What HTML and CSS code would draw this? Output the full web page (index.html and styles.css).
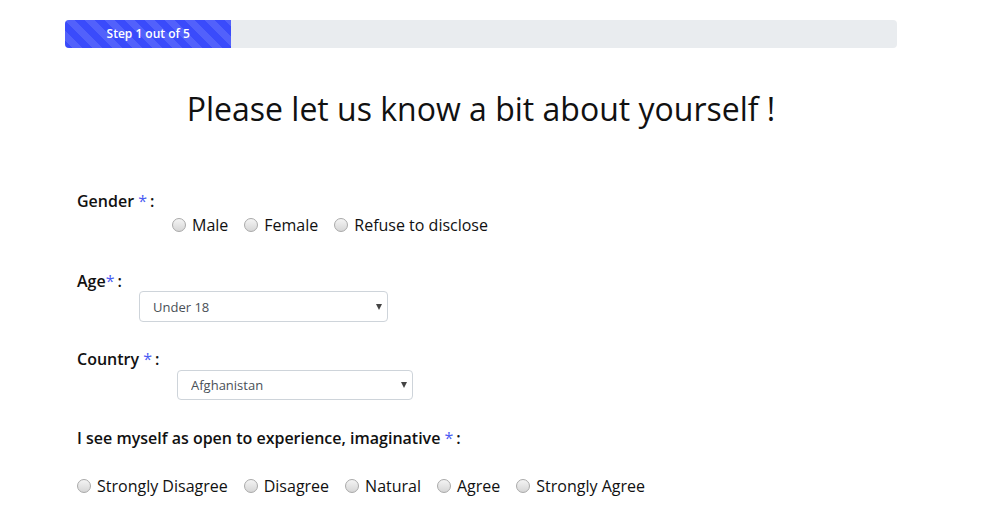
FILE: index.html
```html
<!DOCTYPE html>
<html lang="en">
<head>
<meta charset="utf-8">
<title>Survey - Step 1</title>
<link rel="stylesheet" href="styles.css">
</head>
<body>
<div class="page">
  <div class="progress">
    <div class="progress-bar" style="width: 20%">Step 1 out of 5</div>
  </div>

  <h2 class="title">Please let us know a bit about yourself !</h2>

  <form class="form">
    <div class="field field-gender">
      <div class="label">Gender <span class="req">*</span>:</div>
      <div class="radios radios-gender">
        <label class="opt"><input type="radio" name="gender"><span>Male</span></label>
        <label class="opt"><input type="radio" name="gender"><span>Female</span></label>
        <label class="opt"><input type="radio" name="gender"><span>Refuse to disclose</span></label>
      </div>
    </div>

    <div class="field field-age">
      <div class="label">Age<span class="req">*</span>:</div>
      <div class="select-wrap select-age">
        <select class="select">
          <option>Under 18</option>
          <option>18 - 24</option>
          <option>25 - 34</option>
        </select>
      </div>
    </div>

    <div class="field field-country">
      <div class="label">Country <span class="req">*</span>:</div>
      <div class="select-wrap select-country">
        <select class="select">
          <option>Afghanistan</option>
          <option>Albania</option>
        </select>
      </div>
    </div>

    <div class="field field-open">
      <div class="label">I see myself as open to experience, imaginative <span class="req">*</span>:</div>
      <div class="radios radios-open">
        <label class="opt"><input type="radio" name="open"><span>Strongly Disagree</span></label>
        <label class="opt"><input type="radio" name="open"><span>Disagree</span></label>
        <label class="opt"><input type="radio" name="open"><span>Natural</span></label>
        <label class="opt"><input type="radio" name="open"><span>Agree</span></label>
        <label class="opt"><input type="radio" name="open"><span>Strongly Agree</span></label>
      </div>
    </div>
  </form>
</div>
</body>
</html>
```

FILE: styles.css
```css
* { box-sizing: border-box; }

html, body {
  margin: 0;
  padding: 0;
  background: #ffffff;
}

body {
  font-family: "Open Sans", "Noto Sans", sans-serif;
  font-size: 16px;
  line-height: 24px;
  color: #212529;
}

.page {
  width: 832px;
  margin-left: 65px;
  padding-top: 20px;
}

.progress {
  display: flex;
  height: 28px;
  background: #e9ecef;
  border-radius: 4px;
  overflow: hidden;
}

.progress-bar {
  display: flex;
  align-items: center;
  justify-content: center;
  color: #ffffff;
  font-size: 12px;
  font-weight: 600;
  background-color: #3a4bfb;
  background-image: linear-gradient(45deg,
    rgba(255,255,255,.12) 25%, transparent 25%,
    transparent 50%, rgba(255,255,255,.12) 50%,
    rgba(255,255,255,.12) 75%, transparent 75%, transparent);
  background-size: 20px 20px;
}

.title {
  margin: 42px 0 0;
  text-align: center;
  font-size: 32px;
  font-weight: 400;
  line-height: 38px;
  color: #111;
}

.form {
  padding-left: 12px;
  margin-top: 63px;
}

.label {
  font-weight: 600;
  line-height: 20px;
  color: #111;
}

.req {
  color: #4a5bf3;
  font-weight: 400;
  margin-right: 3px;
}

.radios {
  display: flex;
  align-items: center;
}

.radios-gender {
  margin-top: 2px;
  margin-left: 95px;
}

.radios-open {
  margin-top: 26px;
}

.opt {
  display: flex;
  align-items: center;
  gap: 6px;
  margin-right: 16px;
  color: #111;
}

.opt input {
  -webkit-appearance: none;
  appearance: none;
  width: 14px;
  height: 14px;
  margin: 0;
  border-radius: 50%;
  border: 1px solid #a9a9a9;
  background: linear-gradient(#f4f4f4, #d6d6d6);
}

.field-age { margin-top: 34px; }
.field-country { margin-top: 27px; }
.field-open { margin-top: 28px; }

.select-wrap {
  position: relative;
}

.select-wrap::after {
  content: "";
  position: absolute;
  right: 6px;
  top: 50%;
  margin-top: -3px;
  border-left: 3.5px solid transparent;
  border-right: 3.5px solid transparent;
  border-top: 6px solid #444;
  pointer-events: none;
}

.select-age {
  margin-left: 62px;
  width: 249px;
}

.select-country {
  margin-left: 100px;
  width: 236px;
  margin-top: 1px;
}

.select {
  -webkit-appearance: none;
  appearance: none;
  display: block;
  width: 100%;
  height: 31px;
  padding: 0 20px 0 13px;
  font-family: "Open Sans", "Noto Sans", sans-serif;
  font-size: 13px;
  color: #495057;
  background: #ffffff;
  border: 1px solid #ced4da;
  border-radius: 4px;
}

.select-country .select { height: 30px; }
```
